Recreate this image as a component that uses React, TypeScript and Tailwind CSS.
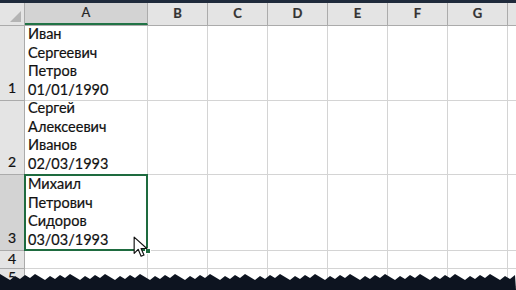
import React from "react";

// Spreadsheet excerpt: column A holds multi-line names + dates
const COLS = ["B", "C", "D", "E", "F", "G"];

const ROWS: { n: string; lines: string[]; h: string }[] = [
  { n: "1", lines: ["Иван", "Сергеевич", "Петров", "01/01/1990"], h: "h-[75px]" },
  { n: "2", lines: ["Сергей", "Алексеевич", "Иванов", "02/03/1993"], h: "h-[74px]" },
  { n: "3", lines: ["Михаил", "Петрович", "Сидоров", "03/03/1993"], h: "h-[76px]" },
];

const font = { fontFamily: "Lato, 'Noto Sans', sans-serif" };

function Cursor() {
  return (
    <svg className="absolute left-[108px] top-[61px]" width="15" height="22" viewBox="0 0 13 19">
      <path d="M1 1 L1 15 L4.5 11.5 L7 17.5 L9.5 16.5 L7 10.8 L12 10.8 Z" fill="#fff" stroke="#111" strokeWidth="1" strokeLinejoin="round" />
    </svg>
  );
}

function TornEdge() {
  // jagged dark strip along the bottom
  const pts: string[] = [];
  for (let x = 0; x <= 516; x += 5) {
    const y = 6 + ((x * 37) % 7) - ((x * 13) % 5);
    pts.push(`${x},${y}`);
  }
  return (
    <svg className="absolute left-0 bottom-0" width="516" height="22" viewBox="0 0 516 22">
      <polygon points={`0,22 ${pts.join(" ")} 516,22`} fill="#0d1420" />
    </svg>
  );
}

function EmptyCells({ h }: { h: string }) {
  return (
    <>
      {COLS.map((c) => (
        <div key={c} className={`${h} w-[60px] shrink-0 border-r border-b border-[#d4d4d4]`} />
      ))}
      <div className={`${h} flex-1 border-b border-[#d4d4d4]`} />
    </>
  );
}

export default function App() {
  return (
    <div className="relative w-[516px] h-[290px] overflow-hidden bg-white text-[#111] [-webkit-text-stroke:0.2px]" style={font}>
      <div className="h-[3px] bg-[#1e2a3b]" />
      {/* Column headers */}
      <div className="flex h-[23px] bg-[#e4e4e4] border-b border-[#ababab]">
        <div className="relative w-[25px] shrink-0 border-r border-[#ababab]">
          <div className="absolute right-[3px] bottom-[3px] w-0 h-0 border-l-[11px] border-l-transparent border-b-[11px] border-b-[#b4b4b4]" />
        </div>
        <div className="w-[123px] shrink-0 flex items-center justify-center bg-[#d3d3d3] border-r border-[#ababab] border-b-2 border-b-[#217346] text-[13px] text-[#262626]">
          A
        </div>
        {COLS.map((c) => (
          <div key={c} className="w-[60px] shrink-0 flex items-center justify-center border-r border-[#ababab] text-[13px] font-bold text-[#333]">
            {c}
          </div>
        ))}
        <div className="flex-1" />
      </div>

      {ROWS.map((r, i) => {
        const sel = i === 2;
        return (
          <div key={r.n} className="flex">
            <div className={`${r.h} w-[25px] shrink-0 flex items-end justify-center pb-[2px] border-r border-b border-[#ababab] text-[14px] ${sel ? "bg-[#d3d3d3]" : "bg-[#e4e4e4]"}`}>
              {r.n}
            </div>
            <div className={`${r.h} relative w-[123px] shrink-0 border-r border-b border-[#d4d4d4] flex flex-col justify-end pl-[3px] pb-[1px] text-[14.5px] leading-[18.5px]`}>
              {r.lines.map((l) => (
                <div key={l}>{l}</div>
              ))}
              {sel && (
                <>
                  <div className="absolute left-[-1px] top-[-1px] right-[-1px] bottom-[-1px] border-2 border-[#1e6b3f]" />
                  <div className="absolute right-[-4px] bottom-[-4px] w-[6px] h-[6px] bg-[#1e6b3f] border border-white" />
                  <Cursor />
                </>
              )}
            </div>
            <EmptyCells h={r.h} />
          </div>
        );
      })}

      {["4", "5"].map((n) => (
        <div key={n} className="flex">
          <div className="h-[18px] w-[25px] shrink-0 flex items-end justify-center border-r border-b border-[#ababab] bg-[#e4e4e4] text-[14px] leading-[18px]">
            {n}
          </div>
          <div className="h-[18px] w-[123px] shrink-0 border-r border-b border-[#d4d4d4]" />
          <EmptyCells h="h-[18px]" />
        </div>
      ))}
      <TornEdge />
    </div>
  );
}
